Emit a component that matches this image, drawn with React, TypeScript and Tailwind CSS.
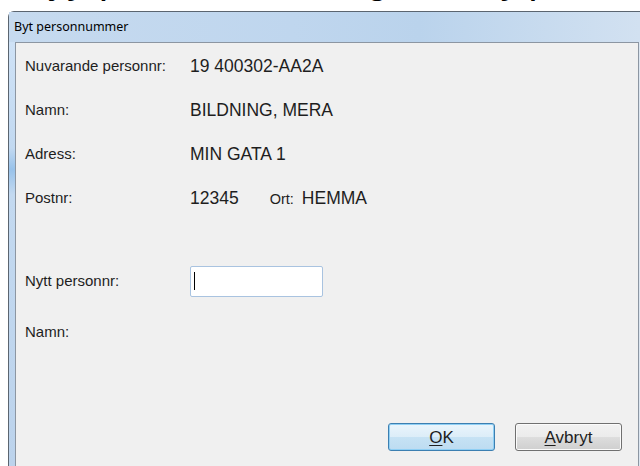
const sans = "font-['Liberation_Sans',Arial,sans-serif]";

// Descenders of the heading line that sits just above the dialog
function PageStrip() {
  return (
    <div className="h-[11px] overflow-hidden bg-white">
      <div className="flex -mt-[41px] text-[40px] leading-none text-black font-['Liberation_Sans',Arial,sans-serif]">
        <span className="ml-[50px]">j</span>
        <span className="ml-[8px]">y</span>
        <span className="ml-[12px]">p</span>
        <span className="ml-[122px]">,</span>
        <span className="ml-[112px]">g</span>
        <span className="ml-[112px]">y</span>
        <span className="ml-[8px]">p</span>
      </div>
    </div>
  );
}

function InfoRow({ label, children }: { label: string; children?: React.ReactNode }) {
  return (
    <div className="flex items-center h-[44px]">
      <div className="w-[165px] text-[15px] text-[#1e1e1e]">{label}</div>
      <div className="flex items-baseline text-[17.5px] text-[#1e1e1e]">{children}</div>
    </div>
  );
}

function DlgButton({
  hotkey,
  rest,
  primary,
}: {
  hotkey: string;
  rest: string;
  primary?: boolean;
}) {
  return (
    <button
      className={
        "w-[107px] h-[28px] rounded-[3px] border text-[17px] leading-none text-[#1e1e1e] " +
        (primary
          ? "border-[#3c7fb1] bg-[linear-gradient(#eaf5fc_0%,#dcedf8_50%,#c6e2f4_51%,#bddcf1_100%)] shadow-[inset_0_0_0_1px_#8fcff4]"
          : "border-[#707070] bg-[linear-gradient(#f2f2f2_0%,#ebebeb_50%,#dddddd_51%,#cfcfcf_100%)] shadow-[inset_0_0_0_1px_#fbfbfb]")
      }
    >
      <span className="underline underline-offset-2">{hotkey}</span>
      {rest}
    </button>
  );
}

export default function App() {
  return (
    <div className={"w-[640px] h-[466px] overflow-hidden bg-white " + sans}>
      <PageStrip />
      <div className="ml-[8px] h-[455px] flex flex-col rounded-tl-[6px] border-l border-t border-[#5b6570] bg-[#c9dcf1]">
        {/* caption */}
        <div className="h-[30px] flex items-center pl-[5px] bg-[linear-gradient(90deg,#c6daef_0%,#bfd6ee_45%,#bad3ec_65%,#d2e1f1_100%)]">
          <span className="text-[12.5px] text-black font-['Noto_Sans','Open_Sans',sans-serif]">
            Byt personnummer
          </span>
        </div>
        <div className="flex flex-1">
          {/* left frame */}
          <div className="w-[6px] bg-[linear-gradient(#cfe2f6_0%,#c2d9f1_25%,#98c2ea_30%,#c3d9f0_36%,#bcd3ec_100%)]" />
          <div className="flex-1 flex flex-col border-l border-t border-r border-[#8c96a2] bg-[#f0f0f0] pl-[9px] pt-[1px]">
            <InfoRow label="Nuvarande personnr:">19 400302-AA2A</InfoRow>
            <InfoRow label="Namn:">BILDNING, MERA</InfoRow>
            <InfoRow label="Adress:">MIN GATA 1</InfoRow>
            <InfoRow label="Postnr:">
              <span>12345</span>
              <span className="ml-[31px] text-[14.5px]">Ort:</span>
              <span className="ml-[8px]">HEMMA</span>
            </InfoRow>

            <div className="flex items-center h-[44px] mt-[39px]">
              <div className="w-[165px] text-[15px] text-[#1e1e1e]">Nytt personnr:</div>
              <div className="w-[133px] h-[31px] border border-[#a9c3e0] rounded-[2px] bg-white flex items-center pl-[3px]">
                <div className="w-px h-[18px] bg-black" />
              </div>
            </div>
            <div className="flex items-center h-[44px] mt-[7px]">
              <div className="text-[15px] text-[#1e1e1e]">Namn:</div>
            </div>

            <div className="flex justify-end gap-[20px] mt-[69px] pr-[16px]">
              <DlgButton hotkey="O" rest="K" primary />
              <DlgButton hotkey="A" rest="vbryt" />
            </div>
          </div>
          <div className="w-px bg-[#dce6f1]" />
        </div>
      </div>
    </div>
  );
}
